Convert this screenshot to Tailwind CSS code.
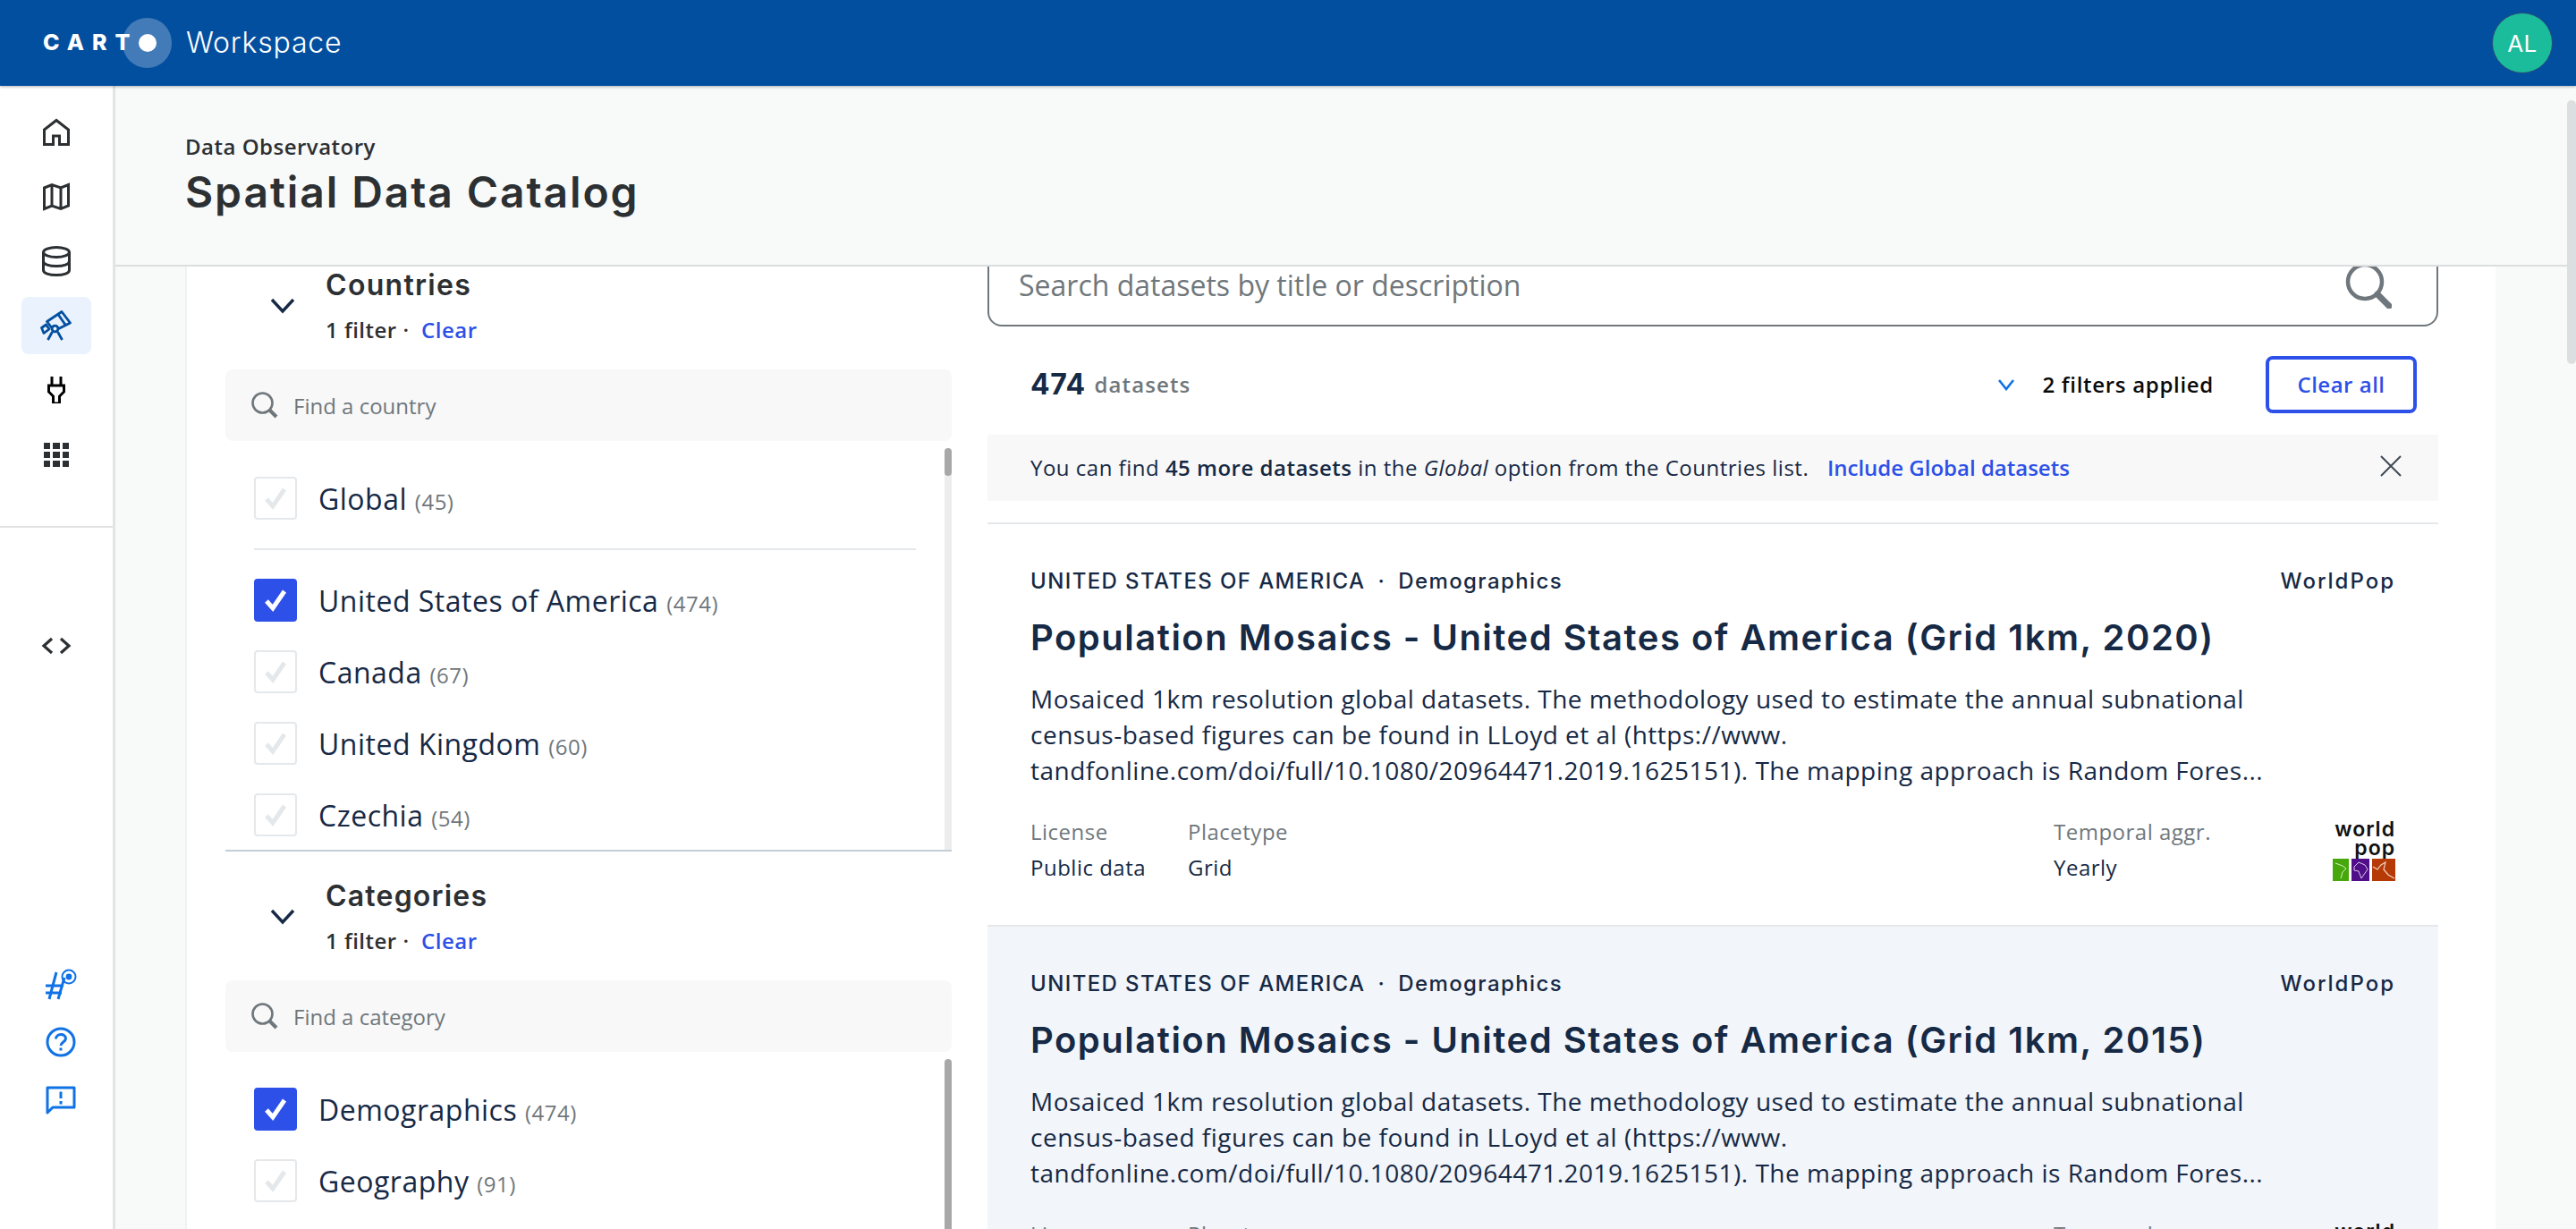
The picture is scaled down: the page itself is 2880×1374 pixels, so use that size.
<!DOCTYPE html>
<html lang="en">
<head>
<meta charset="UTF-8">
<title>Spatial Data Catalog</title>
<script src="https://cdn.jsdelivr.net/npm/@tailwindcss/browser@4"></script>
</head>
<body class="relative flex flex-col w-[2880px] h-[1374px] overflow-hidden font-['Open_Sans',sans-serif] tracking-[0.5px] text-[#162945] bg-white">

<!-- top bar -->
<header class="relative z-10 flex items-center justify-between h-[96px] pl-[48px] pr-[26px] bg-[#034f9f] shadow-[0_1px_3px_rgba(0,0,0,0.3)] shrink-0">
  <div class="flex items-center">
    <div class="flex items-center w-[160px] h-[56px] relative">
      <span class="font-['Inter',sans-serif] font-extrabold text-[25px] tracking-[9px] text-white">CART</span>
      <span class="absolute left-[89px] top-0 w-[55px] h-[56px] rounded-full bg-white/25 flex items-center justify-center">
        <span class="w-[20px] h-[20px] rounded-full bg-white"></span>
      </span>
    </div>
    <span class="font-['Inter',sans-serif] font-light text-[32px] text-white tracking-[0.8px]">Workspace</span>
  </div>
  <div class="w-[68px] h-[68px] rounded-full bg-[#1abc9c] border border-[#2b4a7a] flex items-center justify-center font-['Inter',sans-serif] text-[26px] text-white">AL</div>
</header>

<div class="flex flex-1 min-h-0">
  <!-- left nav -->
  <aside class="flex flex-col w-[129px] shrink-0 border-r-[3px] border-[#e2e4e4] bg-white pt-[16px] pb-[127px]">
    <div class="flex items-center justify-center h-[72px]">
      <svg width="36" height="36" viewBox="0 0 36 36" fill="none" stroke="#2c3033" stroke-width="3"><path d="M18 4.5 L4.5 15 V31.5 H14.5 V22 H21.5 V31.5 H31.5 V15 Z"/></svg>
    </div>
    <div class="flex items-center justify-center h-[72px]">
      <svg width="36" height="36" viewBox="0 0 36 36" fill="none" stroke="#2c3033" stroke-width="3"><path d="M4.5 8 L13 4.5 L23 8 L31.5 4.5 V28 L23 31.5 L13 28 L4.5 31.5 Z M13 4.5 V28 M23 8 V31.5"/></svg>
    </div>
    <div class="flex items-center justify-center h-[72px]">
      <svg width="36" height="36" viewBox="0 0 36 36" fill="none" stroke="#2c3033" stroke-width="3"><ellipse cx="18" cy="8" rx="14.5" ry="5.5"/><path d="M3.5 8 V28 C3.5 31.5 10 33.5 18 33.5 C26 33.5 32.5 31.5 32.5 28 V8 M3.5 18 C3.5 21.5 10 23.5 18 23.5 C26 23.5 32.5 21.5 32.5 18"/></svg>
    </div>
    <div class="flex items-center justify-center h-[72px]">
      <div class="flex items-center justify-center w-[78px] h-[64px] rounded-[8px] bg-[#eaf2fd]">
        <svg width="36" height="34" viewBox="0 0 36 34" fill="none" stroke="#034f9f" stroke-width="2.8" stroke-linejoin="round"><path d="M24 1.5 L33.5 14 L15.5 23 L7.5 12.5 Z M20 4.5 L28 16"/><path d="M1.5 19.5 L6.5 16 L10 21 L4 25.5 Z"/><circle cx="16.5" cy="20.5" r="3.4" fill="#eaf2fd"/><path d="M13.5 24 L8.5 33 M19.5 24 L24.5 33"/></svg>
      </div>
    </div>
    <div class="flex items-center justify-center h-[72px]">
      <svg width="20" height="30" viewBox="0 0 20 30" fill="none" stroke="#000" stroke-width="3"><path d="M5 0 V9 M15 0 V9"/><path d="M1.5 10 H18.5 V17 L13.5 22 V30 H6.5 V22 L1.5 17 Z"/></svg>
    </div>
    <div class="flex items-center justify-center h-[72px]">
      <div class="grid grid-cols-3 gap-x-[3px] gap-y-[3px] w-[28px]">
        <span class="h-[7px] bg-[#2c3033]"></span><span class="h-[7px] bg-[#2c3033]"></span><span class="h-[7px] bg-[#2c3033]"></span>
        <span class="h-[7px] bg-[#2c3033]"></span><span class="h-[7px] bg-[#2c3033]"></span><span class="h-[7px] bg-[#2c3033]"></span>
        <span class="h-[7px] bg-[#2c3033]"></span><span class="h-[7px] bg-[#2c3033]"></span><span class="h-[7px] bg-[#2c3033]"></span>
      </div>
    </div>
    <div class="h-[2px] bg-[#e2e4e4] mt-[44px]"></div>
    <div class="flex items-center justify-center h-[72px] mt-[96px]">
      <svg width="34" height="24" viewBox="0 0 34 24" fill="none" stroke="#2c3033" stroke-width="3.2"><path d="M12 4 L3 12 L12 20 M22 4 L31 12 L22 20"/></svg>
    </div>
    <div class="flex flex-col items-center mt-auto pl-[9px]">
      <svg width="36" height="36" viewBox="0 0 36 36" fill="none" stroke="#0f72e5" stroke-width="3"><path d="M13 4 L5 34 M22 10 L15 34 M1 19 H21 M1 27 H19"/><circle cx="27" cy="9" r="7.5" stroke-width="2"/><circle cx="27" cy="9" r="3.4" fill="#0f72e5" stroke="none"/></svg>
      <svg class="mt-[28px]" width="36" height="36" viewBox="0 0 36 36" fill="none" stroke="#0f72e5" stroke-width="3"><circle cx="18" cy="18" r="15"/><path d="M12.5 14.5 C12.5 8 23.5 8 23.5 14 C23.5 18 18 18 18 22"/><path d="M18 24.5 V27.5"/></svg>
      <svg class="mt-[30px]" width="36" height="34" viewBox="0 0 36 34" fill="none" stroke="#0f72e5" stroke-width="3"><path d="M3 3 H33 V25 H9 L3 31 Z" stroke-linejoin="round"/><path d="M18 7.5 V15 M18 18 V21.5"/></svg>
    </div>
  </aside>

  <main class="flex flex-col flex-1 min-w-0 bg-[#f8f9f9]">
    <div class="flex flex-col h-[202px] shrink-0 border-b-2 border-[#dcdfdf] pl-[78px] pt-[50px] text-[#2c3033]">
      <p class="text-[24px] font-semibold leading-[36px]">Data Observatory</p>
      <h1 class="font-['Inter',sans-serif] text-[48px] font-semibold leading-[64px] mt-[1px] tracking-[1.9px]">Spatial Data Catalog</h1>
    </div>

    <div class="flex-1 min-h-0 overflow-hidden pl-[78px]">
      <div class="flex w-[2583px] h-full bg-white border-l-2 border-[#f0f1f1] pl-[43px]">

        <!-- filters -->
        <div class="flex flex-col w-[812px] shrink-0 h-full">
          <section class="flex flex-col h-[654px] shrink-0 border-b-2 border-[#c3ced6]">
            <div class="flex items-center pt-[1px]">
              <div class="flex justify-center w-[112px] pl-[16px] pb-[4px]">
                <svg width="28" height="18" viewBox="0 0 28 18" fill="none" stroke="#162945" stroke-width="3.4"><path d="M2 2 L14 15 L26 2"/></svg>
              </div>
              <div>
                <h2 class="font-['Inter',sans-serif] text-[32px] font-semibold h-[40px] leading-[40px] tracking-[1.3px] text-[#2c3033]">Countries</h2>
                <p class="mt-[10px] h-[40px] leading-[40px] text-[24px] font-semibold text-[#2c3033]">1 filter ·&nbsp; <span class="text-[#2c50e8]">Clear</span></p>
              </div>
            </div>
            <div class="flex items-center gap-[16px] h-[80px] mt-[24px] px-[28px] rounded-[8px] bg-[#f8f8f8] tracking-normal">
              <svg width="32" height="32" viewBox="0 0 32 32" fill="none" stroke="#6f777c" stroke-width="2.6"><circle cx="13.5" cy="13.5" r="11"/><path d="M21.5 21.5 L29 29" stroke-width="4"/></svg>
              <span class="text-[24px] text-[#6f777c] pt-[2px]">Find a country</span>
            </div>
            <div class="relative flex-1 min-h-0 overflow-hidden pl-[32px] pr-[40px] pt-[24px]">
              <div class="absolute right-0 top-[8px] bottom-0 w-[8px] rounded-t-[4px] bg-[#ededed]">
                <div class="w-[8px] h-[31px] rounded-[4px] bg-[#a8a8a8]"></div>
              </div>
              <label class="flex items-center h-[80px]">
                <span class="flex items-center justify-center w-[48px] h-[48px] rounded-[4px] border-2 border-[#e5e8eb] shrink-0">
                  <svg width="32" height="32" viewBox="0 0 32 32" fill="none" stroke="#e5e8eb" stroke-width="5"><path d="M6 17 L13 25 L26 6"/></svg>
                </span>
                <span class="ml-[24px] pt-[2px] text-[32px]">Global <span class="text-[24px] text-[#6f777c]">(45)</span></span>
              </label>
              <div class="h-[2px] bg-[#e5e8eb] my-[16px]"></div>
              <label class="flex items-center h-[80px]">
                <span class="flex items-center justify-center w-[48px] h-[48px] rounded-[4px] bg-[#2c50e8] shrink-0">
                  <svg width="32" height="32" viewBox="0 0 32 32" fill="none" stroke="#fff" stroke-width="5"><path d="M6 17 L13 25 L26 6"/></svg>
                </span>
                <span class="ml-[24px] pt-[2px] text-[32px]">United States of America <span class="text-[24px] text-[#6f777c]">(474)</span></span>
              </label>
              <label class="flex items-center h-[80px]">
                <span class="flex items-center justify-center w-[48px] h-[48px] rounded-[4px] border-2 border-[#e5e8eb] shrink-0">
                  <svg width="32" height="32" viewBox="0 0 32 32" fill="none" stroke="#e5e8eb" stroke-width="5"><path d="M6 17 L13 25 L26 6"/></svg>
                </span>
                <span class="ml-[24px] pt-[2px] text-[32px]">Canada <span class="text-[24px] text-[#6f777c]">(67)</span></span>
              </label>
              <label class="flex items-center h-[80px]">
                <span class="flex items-center justify-center w-[48px] h-[48px] rounded-[4px] border-2 border-[#e5e8eb] shrink-0">
                  <svg width="32" height="32" viewBox="0 0 32 32" fill="none" stroke="#e5e8eb" stroke-width="5"><path d="M6 17 L13 25 L26 6"/></svg>
                </span>
                <span class="ml-[24px] pt-[2px] text-[32px]">United Kingdom <span class="text-[24px] text-[#6f777c]">(60)</span></span>
              </label>
              <label class="flex items-center h-[80px]">
                <span class="flex items-center justify-center w-[48px] h-[48px] rounded-[4px] border-2 border-[#e5e8eb] shrink-0">
                  <svg width="32" height="32" viewBox="0 0 32 32" fill="none" stroke="#e5e8eb" stroke-width="5"><path d="M6 17 L13 25 L26 6"/></svg>
                </span>
                <span class="ml-[24px] pt-[2px] text-[32px]">Czechia <span class="text-[24px] text-[#6f777c]">(54)</span></span>
              </label>
            </div>
          </section>

          <section class="flex flex-col flex-1 min-h-0 pt-[30px]">
            <div class="flex items-center">
              <div class="flex justify-center w-[112px] pl-[16px] pb-[4px]">
                <svg width="28" height="18" viewBox="0 0 28 18" fill="none" stroke="#162945" stroke-width="3.4"><path d="M2 2 L14 15 L26 2"/></svg>
              </div>
              <div>
                <h2 class="font-['Inter',sans-serif] text-[32px] font-semibold h-[40px] leading-[40px] tracking-[1.2px] text-[#2c3033]">Categories</h2>
                <p class="mt-[10px] h-[40px] leading-[40px] text-[24px] font-semibold text-[#2c3033]">1 filter ·&nbsp; <span class="text-[#2c50e8]">Clear</span></p>
              </div>
            </div>
            <div class="flex items-center gap-[16px] h-[80px] mt-[24px] px-[28px] rounded-[8px] bg-[#f8f8f8] tracking-normal shrink-0">
              <svg width="32" height="32" viewBox="0 0 32 32" fill="none" stroke="#6f777c" stroke-width="2.6"><circle cx="13.5" cy="13.5" r="11"/><path d="M21.5 21.5 L29 29" stroke-width="4"/></svg>
              <span class="text-[24px] text-[#6f777c] pt-[2px]">Find a category</span>
            </div>
            <div class="relative flex-1 min-h-0 overflow-hidden pl-[32px] pr-[40px] pt-[24px]">
              <div class="absolute right-0 top-[8px] bottom-0 w-[8px] rounded-t-[4px] bg-[#a8a8a8]"></div>
              <label class="flex items-center h-[80px]">
                <span class="flex items-center justify-center w-[48px] h-[48px] rounded-[4px] bg-[#2c50e8] shrink-0">
                  <svg width="32" height="32" viewBox="0 0 32 32" fill="none" stroke="#fff" stroke-width="5"><path d="M6 17 L13 25 L26 6"/></svg>
                </span>
                <span class="ml-[24px] pt-[2px] text-[32px]">Demographics <span class="text-[24px] text-[#6f777c]">(474)</span></span>
              </label>
              <label class="flex items-center h-[80px]">
                <span class="flex items-center justify-center w-[48px] h-[48px] rounded-[4px] border-2 border-[#e5e8eb] shrink-0">
                  <svg width="32" height="32" viewBox="0 0 32 32" fill="none" stroke="#e5e8eb" stroke-width="5"><path d="M6 17 L13 25 L26 6"/></svg>
                </span>
                <span class="ml-[24px] pt-[2px] text-[32px]">Geography <span class="text-[24px] text-[#6f777c]">(91)</span></span>
              </label>
            </div>
          </section>
        </div>

        <!-- results -->
        <div class="flex flex-col w-[1622px] ml-[40px] shrink-0">
          <div class="flex items-center justify-between h-[92px] -mt-[25px] pl-[33px] pr-[50px] bg-white border-2 border-[#6f777c] rounded-[16px] relative shrink-0 tracking-normal">
            <span class="text-[32px] text-[#6f777c]">Search datasets by title or description</span>
            <svg width="52" height="52" viewBox="0 0 52 52" fill="none" stroke="#6f777c" stroke-width="4.5"><circle cx="22" cy="22" r="19"/><path d="M36 36 L49 49" stroke-width="7" stroke-linecap="round"/></svg>
          </div>

          <div class="flex items-center h-[64px] mt-[33px] pl-[48px] pr-[24px] shrink-0">
            <span class="font-['Inter',sans-serif] text-[32px] font-bold">474</span>
            <span class="ml-[10px] text-[24px] font-semibold tracking-[1.1px] text-[#6f777c]">datasets</span>
            <svg class="ml-auto" width="20" height="14" viewBox="0 0 20 14" fill="none" stroke="#0f72e5" stroke-width="2.6"><path d="M2 2 L10 12 L18 2"/></svg>
            <span class="ml-[31px] text-[24px] font-semibold tracking-[0.7px] text-[#0b0b0b]">2 filters applied</span>
            <button class="ml-[58px] w-[169px] h-[64px] rounded-[8px] border-4 border-[#2c50e8] text-[24px] font-semibold text-[#2c50e8]">Clear all</button>
          </div>

          <div class="flex items-center justify-between h-[74px] mt-[24px] pl-[48px] pr-[41px] bg-[#f8f8f8] text-[24px] shrink-0">
            <p>You can find <b class="font-semibold">45 more datasets</b> in the <i>Global</i> option from the Countries list. <a class="ml-[14px] font-semibold tracking-normal text-[#2c50e8]">Include Global datasets</a></p>
            <svg class="mb-[4px]" width="24" height="24" viewBox="0 0 24 24" fill="none" stroke="#3f4a55" stroke-width="2"><path d="M1 1 L23 23 M23 1 L1 23"/></svg>
          </div>
          <div class="h-[2px] bg-[#e5e8eb] mt-[24px] shrink-0"></div>

          <article class="h-[450px] shrink-0 border-b-2 border-[#e5e8eb] px-[48px] pt-[48px]">
            <div class="flex justify-between h-[32px] leading-[32px] font-['Inter',sans-serif] text-[24px] font-medium tracking-[1.4px]">
              <span>UNITED STATES OF AMERICA<span class="mx-[14px]">·</span>Demographics</span>
              <span class="tracking-[2px]">WorldPop</span>
            </div>
            <h3 class="font-['Inter',sans-serif] text-[40px] font-semibold leading-[56px] mt-[19px] whitespace-nowrap tracking-[1.5px]">Population Mosaics - United States of America (Grid 1km, 2020)</h3>
            <p class="text-[28px] leading-[40px] mt-[20px] whitespace-nowrap">Mosaiced 1km resolution global datasets. The methodology used to estimate the annual subnational<br>census-based figures can be found in LLoyd et al (https://www.<br>tandfonline.com/doi/full/10.1080/20964471.2019.1625151). The mapping approach is Random Fores...</p>
            <div class="flex mt-[31px] text-[24px] leading-[36px]">
              <dl class="w-[176px]"><dt class="text-[#6f777c]">License</dt><dd class="mt-[4px]">Public data</dd></dl>
              <dl class="w-[968px]"><dt class="text-[#6f777c]">Placetype</dt><dd class="mt-[4px]">Grid</dd></dl>
              <dl><dt class="text-[#6f777c]">Temporal aggr.</dt><dd class="mt-[4px]">Yearly</dd></dl>
              <div class="ml-auto mt-[5px] flex flex-col items-end w-[70px] font-['Inter',sans-serif] font-semibold text-[23px] leading-[21px] tracking-[1px] text-[#111]">
                <span>world</span><span>pop</span>
                <div class="flex gap-[3px] mt-[1px]">
                  <svg width="18" height="25" viewBox="0 0 18 25"><rect width="18" height="25" fill="#46a80b"/><path d="M3 5 L11 8 L15 11 L11 15 L9 22" fill="none" stroke="#d6efc4" stroke-width="1"/></svg>
                  <svg width="20" height="25" viewBox="0 0 20 25"><rect width="20" height="25" fill="#500f88"/><path d="M3 9 L8 4 L15 7 L18 12 L13 19 L11 22 L8 14 L3 13 Z" fill="none" stroke="#d9c6ea" stroke-width="1"/></svg>
                  <svg width="26" height="25" viewBox="0 0 26 25"><rect width="26" height="25" fill="#b53a06"/><path d="M1 9 L6 12 L10 7 L15 4 L13 12 L18 18 L25 22" fill="none" stroke="#f1d2c2" stroke-width="1.2"/></svg>
                </div>
              </div>
            </div>
          </article>

          <article class="h-[450px] shrink-0 bg-[#f2f5f9] px-[48px] pt-[48px]">
            <div class="flex justify-between h-[32px] leading-[32px] font-['Inter',sans-serif] text-[24px] font-medium tracking-[1.4px]">
              <span>UNITED STATES OF AMERICA<span class="mx-[14px]">·</span>Demographics</span>
              <span class="tracking-[2px]">WorldPop</span>
            </div>
            <h3 class="font-['Inter',sans-serif] text-[40px] font-semibold leading-[56px] mt-[19px] whitespace-nowrap tracking-[1.5px]">Population Mosaics - United States of America (Grid 1km, 2015)</h3>
            <p class="text-[28px] leading-[40px] mt-[20px] whitespace-nowrap">Mosaiced 1km resolution global datasets. The methodology used to estimate the annual subnational<br>census-based figures can be found in LLoyd et al (https://www.<br>tandfonline.com/doi/full/10.1080/20964471.2019.1625151). The mapping approach is Random Fores...</p>
            <div class="flex mt-[31px] text-[24px] leading-[36px]">
              <dl class="w-[176px]"><dt class="text-[#6f777c]">License</dt></dl>
              <dl class="w-[968px]"><dt class="text-[#6f777c]">Placetype</dt></dl>
              <dl><dt class="text-[#6f777c]">Temporal aggr.</dt></dl>
              <div class="ml-auto mt-[5px] flex flex-col items-end w-[70px] font-['Inter',sans-serif] font-semibold text-[23px] leading-[21px] tracking-[1px] text-[#111]"><span>world</span></div>
            </div>
          </article>
        </div>
      </div>
    </div>
  </main>
</div>

<!-- page scrollbar -->
<div class="absolute top-[112px] right-0 w-[10px] h-[295px] rounded-[5px] bg-[#dcdfe0]"></div>
</body>
</html>
